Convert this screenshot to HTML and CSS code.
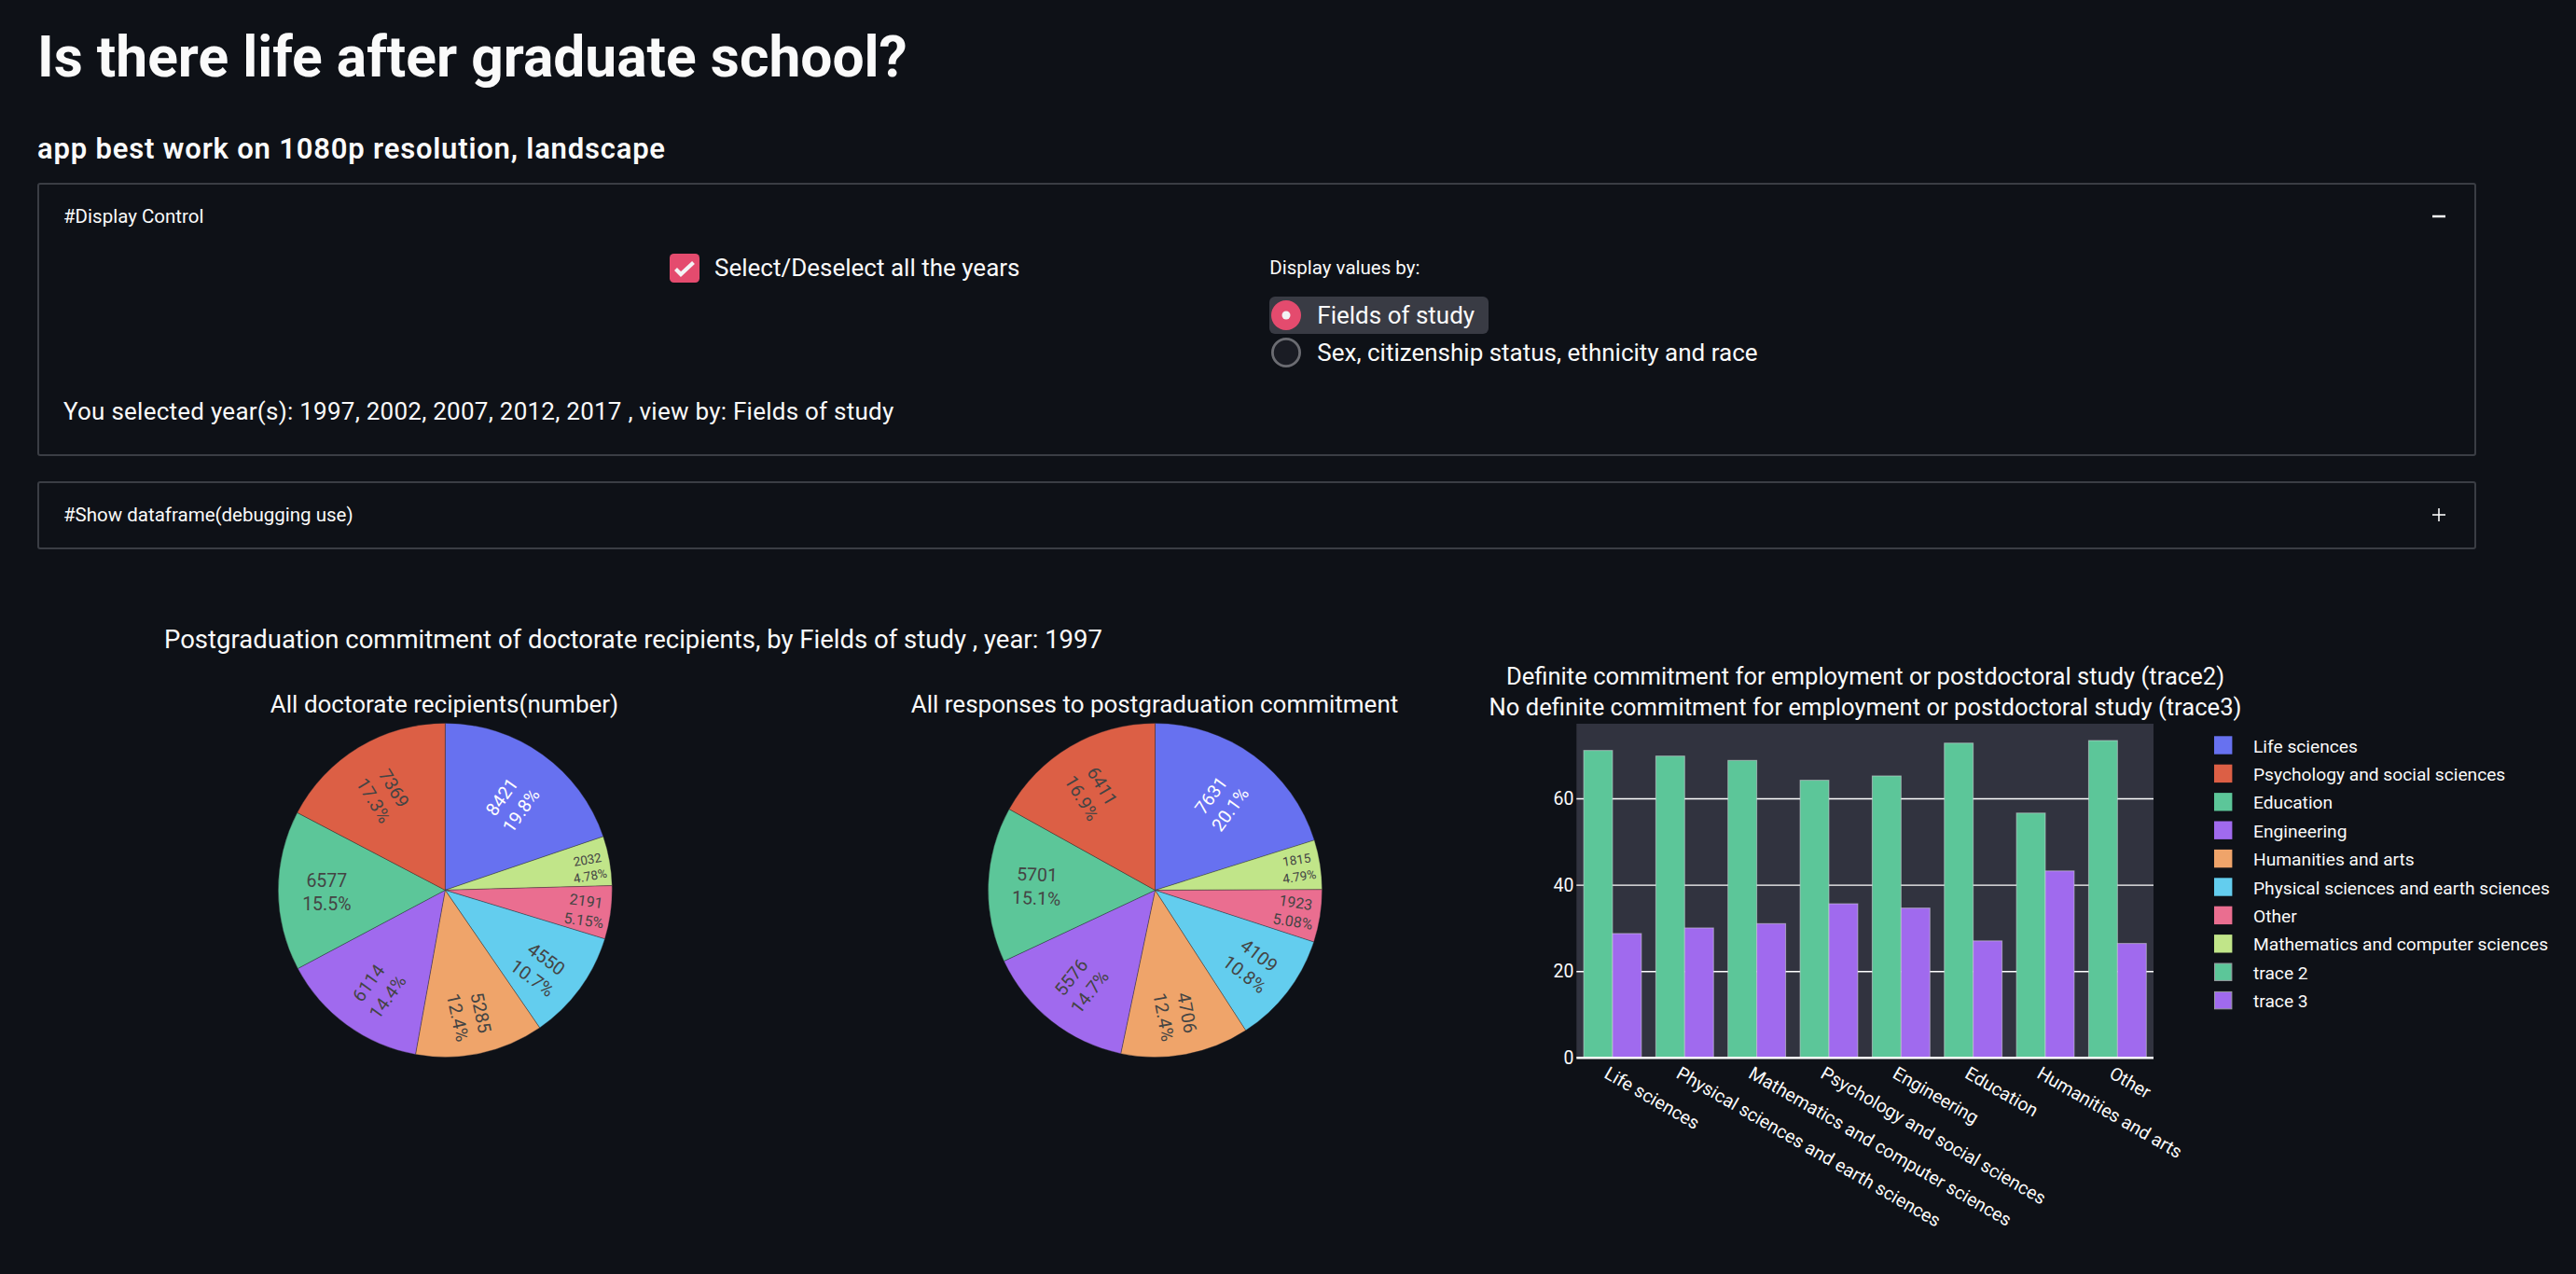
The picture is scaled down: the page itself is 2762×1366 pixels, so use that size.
FILE: index.html
```html
<!DOCTYPE html>
<html lang="en">
<head>
<meta charset="utf-8">
<title>Is there life after graduate school?</title>
<link rel="stylesheet" href="styles.css">
</head>
<body>
<main class="app">
  <h1 class="title">Is there life after graduate school?</h1>
  <p class="subtitle">app best work on 1080p resolution, landscape</p>

  <section class="expander first">
    <div class="exp-header">
      <span>#Display Control</span>
      <svg class="exp-icon" width="14" height="14" viewBox="0 0 14 14"><line x1="0" y1="7" x2="14" y2="7" stroke="#fafafa" stroke-width="2.5"/></svg>
    </div>
    <div class="exp-body">
      <div class="controls">
        <div class="col"></div>
        <div class="col">
          <div class="checkrow">
            <svg class="checkbox" width="32" height="31" viewBox="0 0 32 31"><rect x="0" y="0" width="32" height="31" rx="4.5" fill="#e44b6e"/><path d="M6.5 16.5 L12 22 L25.5 9.5" fill="none" stroke="#f4f4f6" stroke-width="4.2"/></svg>
            <span>Select/Deselect all the years</span>
          </div>
        </div>
        <div class="col">
          <div class="radio-label">Display values by:</div>
          <div class="radio-row selected">
            <svg width="32" height="32" viewBox="0 0 32 32"><circle cx="16" cy="16" r="16" fill="#e44b6e"/><circle cx="16" cy="16" r="4.5" fill="#f2f2f4"/></svg>
            <span>Fields of study</span>
          </div>
          <div class="radio-row">
            <svg width="32" height="32" viewBox="0 0 32 32"><circle cx="16" cy="16" r="14.6" fill="#1a1c24" stroke="#6b6c72" stroke-width="2.8"/></svg>
            <span>Sex, citizenship status, ethnicity and race</span>
          </div>
        </div>
        <div class="col"></div>
      </div>
      <p class="selected-text">You selected year(s): 1997, 2002, 2007, 2012, 2017 , view by: Fields of study</p>
    </div>
  </section>

  <section class="expander second">
    <div class="exp-header">
      <span>#Show dataframe(debugging use)</span>
      <svg class="exp-icon" width="14" height="14" viewBox="0 0 14 14"><line x1="0" y1="7" x2="14" y2="7" stroke="#fafafa" stroke-width="1.6"/><line x1="7" y1="0" x2="7" y2="14" stroke="#fafafa" stroke-width="1.6"/></svg>
    </div>
  </section>

  <section class="charts">
    <svg class="pie-fig" width="1500" height="700" viewBox="0 0 1500 700">
      <text class="fig-heading" x="136" y="55">Postgraduation commitment of doctorate recipients, by Fields of study , year: 1997</text>
      <text class="sub-title" x="436.5" y="124" text-anchor="middle">All doctorate recipients(number)</text>
      <text class="sub-title" x="1198" y="124" text-anchor="middle">All responses to postgraduation commitment</text>

      <g class="slices">
        <path fill="#6771f0" d="M437.3,314.4 L437.3,135.4 A179,179 0 0 1 606.82,256.91 Z"/>
        <path fill="#c1e589" d="M437.3,314.4 L606.82,256.91 A179,179 0 0 1 616.24,309.6 Z"/>
        <path fill="#ea6e90" d="M437.3,314.4 L616.24,309.6 A179,179 0 0 1 608.47,366.74 Z"/>
        <path fill="#63cdee" d="M437.3,314.4 L608.47,366.74 A179,179 0 0 1 538.66,461.94 Z"/>
        <path fill="#efa46a" d="M437.3,314.4 L538.66,461.94 A179,179 0 0 1 405.49,490.55 Z"/>
        <path fill="#a06aee" d="M437.3,314.4 L405.49,490.55 A179,179 0 0 1 279.28,398.5 Z"/>
        <path fill="#5cc699" d="M437.3,314.4 L279.28,398.5 A179,179 0 0 1 278.72,231.36 Z"/>
        <path fill="#dc5f45" d="M437.3,314.4 L278.72,231.36 A179,179 0 0 1 437.3,135.4 Z"/>

        <path fill="#6771f0" d="M1198.5,314.5 L1198.5,135.5 A179,179 0 0 1 1369.26,260.86 Z"/>
        <path fill="#c1e589" d="M1198.5,314.5 L1369.26,260.86 A179,179 0 0 1 1377.5,313.85 Z"/>
        <path fill="#ea6e90" d="M1198.5,314.5 L1377.5,313.85 A179,179 0 0 1 1368.67,370.02 Z"/>
        <path fill="#63cdee" d="M1198.5,314.5 L1368.67,370.02 A179,179 0 0 1 1295.65,464.84 Z"/>
        <path fill="#efa46a" d="M1198.5,314.5 L1295.65,464.84 A179,179 0 0 1 1161.7,489.68 Z"/>
        <path fill="#a06aee" d="M1198.5,314.5 L1161.7,489.68 A179,179 0 0 1 1036.45,390.52 Z"/>
        <path fill="#5cc699" d="M1198.5,314.5 L1036.45,390.52 A179,179 0 0 1 1042.03,227.56 Z"/>
        <path fill="#dc5f45" d="M1198.5,314.5 L1042.03,227.56 A179,179 0 0 1 1198.5,135.5 Z"/>
      </g>

      <g class="plabels">
        <g transform="translate(508.3,221.7) rotate(-54.4)"><text class="pl light" text-anchor="middle"><tspan x="0" y="-5.8">8421</tspan><tspan x="0" y="19.6">19.8%</tspan></text></g>
        <g transform="translate(371.6,211.7) rotate(58.9)"><text class="pl" text-anchor="middle"><tspan x="0" y="-5.8">7369</tspan><tspan x="0" y="19.6">17.3%</tspan></text></g>
        <g transform="translate(310.3,316.7)"><text class="pl" text-anchor="middle"><tspan x="0" y="-5.8">6577</tspan><tspan x="0" y="19.6">15.5%</tspan></text></g>
        <g transform="translate(365.3,421.4) rotate(-53.9)"><text class="pl" text-anchor="middle"><tspan x="0" y="-5.8">6114</tspan><tspan x="0" y="19.6">14.4%</tspan></text></g>
        <g transform="translate(463.3,448.4) rotate(77.9)"><text class="pl" text-anchor="middle"><tspan x="0" y="-5.8">5285</tspan><tspan x="0" y="19.6">12.4%</tspan></text></g>
        <g transform="translate(538.3,398.4) rotate(36.3)"><text class="pl" text-anchor="middle"><tspan x="0" y="-5.8">4550</tspan><tspan x="0" y="19.6">10.7%</tspan></text></g>
        <g transform="translate(587.3,336.4) rotate(7.7)"><text class="pl mid" text-anchor="middle"><tspan x="0" y="-4.7">2191</tspan><tspan x="0" y="16.1">5.15%</tspan></text></g>
        <g transform="translate(591.3,290.4) rotate(-10.1)"><text class="pl small" text-anchor="middle"><tspan x="0" y="-4">2032</tspan><tspan x="0" y="13.6">4.78%</tspan></text></g>

        <g transform="translate(1268.7,220.2) rotate(-53.7)"><text class="pl light" text-anchor="middle"><tspan x="0" y="-5.8">7631</tspan><tspan x="0" y="19.6">20.1%</tspan></text></g>
        <g transform="translate(1131,209.3) rotate(59.5)"><text class="pl" text-anchor="middle"><tspan x="0" y="-5.8">6411</tspan><tspan x="0" y="19.6">16.9%</tspan></text></g>
        <g transform="translate(1071.6,310.2) rotate(2)"><text class="pl" text-anchor="middle"><tspan x="0" y="-5.8">5701</tspan><tspan x="0" y="19.6">15.1%</tspan></text></g>
        <g transform="translate(1118.4,415.6) rotate(-51.6)"><text class="pl" text-anchor="middle"><tspan x="0" y="-5.8">5576</tspan><tspan x="0" y="19.6">14.7%</tspan></text></g>
        <g transform="translate(1220.3,448.2) rotate(79.5)"><text class="pl" text-anchor="middle"><tspan x="0" y="-5.8">4706</tspan><tspan x="0" y="19.6">12.4%</tspan></text></g>
        <g transform="translate(1302.3,394.4) rotate(37.6)"><text class="pl" text-anchor="middle"><tspan x="0" y="-5.8">4109</tspan><tspan x="0" y="19.6">10.8%</tspan></text></g>
        <g transform="translate(1347.7,337.9) rotate(8.9)"><text class="pl mid" text-anchor="middle"><tspan x="0" y="-4.6">1923</tspan><tspan x="0" y="15.8">5.08%</tspan></text></g>
        <g transform="translate(1351.7,290.7) rotate(-8.8)"><text class="pl small" text-anchor="middle"><tspan x="0" y="-4.1">1815</tspan><tspan x="0" y="14">4.79%</tspan></text></g>
      </g>
    </svg>

    <svg class="bar-fig" width="1222" height="700" viewBox="0 0 1222 700">
      <text class="fig-title" x="460" y="94" text-anchor="middle">Definite commitment for employment or postdoctoral study (trace2)</text>
      <text class="fig-title" x="460" y="127" text-anchor="middle">No definite commitment for employment or postdoctoral study (trace3)</text>

      <rect x="150.3" y="136" width="618.7" height="358.3" fill="#31333f"/>
      <g stroke="#ffffff" stroke-width="1.4">
        <line x1="150.3" y1="401.7" x2="769" y2="401.7"/>
        <line x1="150.3" y1="309.1" x2="769" y2="309.1"/>
        <line x1="150.3" y1="216.5" x2="769" y2="216.5"/>
      </g>

      <g class="bars" stroke="rgba(215,215,220,0.55)" stroke-width="1">
        <rect fill="#5cc699" x="158.03" y="164.64" width="30.94" height="329.66"/>
        <rect fill="#a06aee" x="188.97" y="360.96" width="30.94" height="133.34"/>
        <rect fill="#5cc699" x="235.37" y="170.66" width="30.94" height="323.64"/>
        <rect fill="#a06aee" x="266.31" y="354.94" width="30.94" height="139.36"/>
        <rect fill="#5cc699" x="312.71" y="175.29" width="30.94" height="319.01"/>
        <rect fill="#a06aee" x="343.65" y="350.31" width="30.94" height="143.99"/>
        <rect fill="#5cc699" x="390.05" y="196.59" width="30.94" height="297.71"/>
        <rect fill="#a06aee" x="420.99" y="329.01" width="30.94" height="165.29"/>
        <rect fill="#5cc699" x="467.39" y="191.96" width="30.94" height="302.34"/>
        <rect fill="#a06aee" x="498.33" y="333.64" width="30.94" height="160.66"/>
        <rect fill="#5cc699" x="544.73" y="156.77" width="30.94" height="337.53"/>
        <rect fill="#a06aee" x="575.67" y="368.83" width="30.94" height="125.47"/>
        <rect fill="#5cc699" x="622.07" y="231.78" width="30.94" height="262.52"/>
        <rect fill="#a06aee" x="653.01" y="293.82" width="30.94" height="200.48"/>
        <rect fill="#5cc699" x="699.41" y="153.99" width="30.94" height="340.31"/>
        <rect fill="#a06aee" x="730.35" y="371.6" width="30.94" height="122.7"/>
      </g>
      <line x1="150.3" y1="494.3" x2="769" y2="494.3" stroke="#ffffff" stroke-width="2.5"/>

      <g class="tick" text-anchor="end">
        <text x="147.5" y="494.3" dominant-baseline="central">0</text>
        <text x="147.5" y="401.7" dominant-baseline="central">20</text>
        <text x="147.5" y="309.1" dominant-baseline="central">40</text>
        <text x="147.5" y="216.5" dominant-baseline="central">60</text>
      </g>

      <g class="tick">
        <text transform="translate(182,509) rotate(30)" dominant-baseline="central">Life sciences</text>
        <text transform="translate(259.3,509) rotate(30)" dominant-baseline="central">Physical sciences and earth sciences</text>
        <text transform="translate(336.7,509) rotate(30)" dominant-baseline="central">Mathematics and computer sciences</text>
        <text transform="translate(414,509) rotate(30)" dominant-baseline="central">Psychology and social sciences</text>
        <text transform="translate(491.3,509) rotate(30)" dominant-baseline="central">Engineering</text>
        <text transform="translate(568.7,509) rotate(30)" dominant-baseline="central">Education</text>
        <text transform="translate(646,509) rotate(30)" dominant-baseline="central">Humanities and arts</text>
        <text transform="translate(723.4,509) rotate(30)" dominant-baseline="central">Other</text>
      </g>

      <g class="legend">
        <rect x="834" y="149.3" width="19.4" height="19.4" fill="#6771f0"/>
        <rect x="834" y="179.7" width="19.4" height="19.4" fill="#dc5f45"/>
        <rect x="834" y="210.1" width="19.4" height="19.4" fill="#5cc699"/>
        <rect x="834" y="240.5" width="19.4" height="19.4" fill="#a06aee"/>
        <rect x="834" y="270.9" width="19.4" height="19.4" fill="#efa46a"/>
        <rect x="834" y="301.3" width="19.4" height="19.4" fill="#63cdee"/>
        <rect x="834" y="331.7" width="19.4" height="19.4" fill="#ea6e90"/>
        <rect x="834" y="362.1" width="19.4" height="19.4" fill="#c1e589"/>
        <rect x="834.5" y="393" width="18.4" height="18.4" fill="#5cc699" stroke="#9a9ca2" stroke-width="1"/>
        <rect x="834.5" y="423.4" width="18.4" height="18.4" fill="#a06aee" stroke="#9a9ca2" stroke-width="1"/>
        <g class="legend-text">
          <text x="876" y="166.5">Life sciences</text>
          <text x="876" y="196.9">Psychology and social sciences</text>
          <text x="876" y="227.3">Education</text>
          <text x="876" y="257.7">Engineering</text>
          <text x="876" y="288.1">Humanities and arts</text>
          <text x="876" y="318.5">Physical sciences and earth sciences</text>
          <text x="876" y="348.9">Other</text>
          <text x="876" y="379.3">Mathematics and computer sciences</text>
          <text x="876" y="409.7">trace 2</text>
          <text x="876" y="440.1">trace 3</text>
        </g>
      </g>
    </svg>
  </section>
</main>
</body>
</html>
```

FILE: styles.css
```css
html, body {
  margin: 0;
  padding: 0;
  background: #0e1117;
  color: #fafafa;
  font-family: Roboto, "Liberation Sans", sans-serif;
}

.app {
  box-sizing: border-box;
  width: 2762px;
  min-height: 1366px;
  padding: 25.5px 107px 0 40px;
}

.title {
  margin: 0;
  font-size: 60.5px;
  font-weight: 700;
  line-height: 72px;
}

.subtitle {
  margin: 44px 0 0;
  font-size: 31px;
  font-weight: 600;
  line-height: 36px;
  letter-spacing: 0.8px;
}

.expander {
  border: 2px solid #3a3d44;
  border-radius: 3px;
}

.expander.first {
  margin-top: 18.5px;
}

.expander.second {
  margin-top: 27px;
}

.exp-header {
  display: flex;
  justify-content: space-between;
  align-items: center;
  height: 24px;
  padding: 22.3px 31px 0 26px;
  font-size: 20.5px;
  line-height: 24px;
}

.expander.second .exp-header {
  padding-top: 22.5px;
  padding-bottom: 22.5px;
}

.exp-icon {
  display: block;
}

.exp-body {
  padding: 0 26px 28px;
}

.controls {
  display: grid;
  grid-template-columns: repeat(4, 1fr);
  column-gap: 27.6px;
  margin-top: 19.7px;
  align-items: start;
}

.checkrow {
  display: flex;
  align-items: center;
  gap: 16px;
  height: 36px;
  margin-top: 5.5px;
  padding-left: 3.4px;
  font-size: 26px;
  line-height: 36px;
}

.checkbox {
  display: block;
  flex: none;
}

.radio-label {
  margin-top: 11.5px;
  font-size: 20.5px;
  line-height: 24px;
}

.radio-row {
  box-sizing: border-box;
  display: flex;
  align-items: center;
  gap: 17px;
  height: 40px;
  padding: 4px 15px 4px 2px;
  font-size: 26px;
  line-height: 32px;
  white-space: nowrap;
}

.radio-row svg {
  display: block;
  flex: none;
}

.radio-row.selected {
  display: inline-flex;
  margin-top: 18.5px;
  background: #393b44;
  border-radius: 6px;
}

.selected-text {
  margin: 25px 0 0;
  font-size: 26px;
  line-height: 36px;
  letter-spacing: 0.25px;
}

.charts {
  display: flex;
  margin-top: 51px;
  margin-right: -107px;
}

.charts svg {
  display: block;
  flex: none;
  font-family: Roboto, "Liberation Sans", sans-serif;
}

.fig-heading {
  fill: #fafafa;
  font-size: 27.5px;
}

.fig-title {
  fill: #fafafa;
  font-size: 25.6px;
}

.sub-title {
  fill: #fafafa;
  font-size: 26px;
}

.slices path {
  stroke: rgba(40, 40, 46, 0.45);
  stroke-width: 0.8;
}

.pl {
  fill: #444444;
  font-size: 19.5px;
}

.pl.light {
  fill: #ffffff;
}

.pl.mid {
  font-size: 16px;
}

.pl.small {
  font-size: 13.5px;
}

.tick text {
  fill: #fafafa;
  font-size: 19.5px;
}

.legend-text text {
  fill: #fafafa;
  font-size: 19.2px;
}
```
